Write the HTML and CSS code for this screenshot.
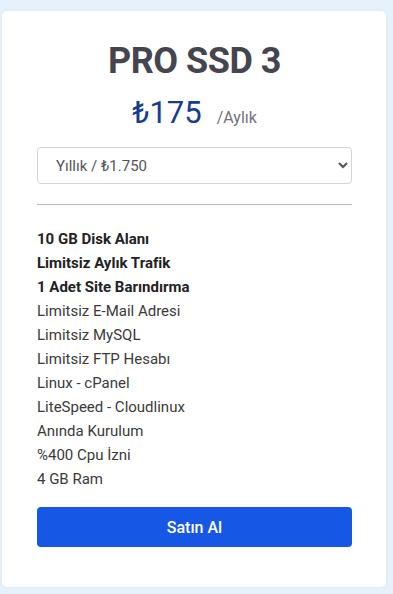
FILE: index.html
```html
<!DOCTYPE html>
<html lang="tr">
<head>
<meta charset="UTF-8" />
<meta name="viewport" content="width=device-width, initial-scale=1" />
<title>PRO SSD 3</title>
<link rel="stylesheet" href="styles.css">
</head>
<body>

<div class="plan">
  <h2 class="plan-title">PRO SSD 3</h2>

  <div class="plan-price">
    <span class="amount">₺175</span>
    <span class="period">/Aylık</span>
  </div>

  <select class="plan-cycle">
    <option>Yıllık / ₺1.750</option>
    <option>Aylık / ₺175</option>
  </select>

  <hr class="plan-sep" />

  <ul class="plan-features">
    <li class="strong">10 GB Disk Alanı</li>
    <li class="strong">Limitsiz Aylık Trafik</li>
    <li class="strong">1 Adet Site Barındırma</li>
    <li>Limitsiz E-Mail Adresi</li>
    <li>Limitsiz MySQL</li>
    <li>Limitsiz FTP Hesabı</li>
    <li>Linux - cPanel</li>
    <li>LiteSpeed - Cloudlinux</li>
    <li>Anında Kurulum</li>
    <li>%400 Cpu İzni</li>
    <li>4 GB Ram</li>
  </ul>

  <button class="plan-buy">Satın Al</button>
</div>

</body>
</html>
```

FILE: styles.css
```css
body {
  margin: 0;
  padding: 11px 7px 8px 2px;
  background: #e6f2fb;
  font-family: Roboto, "Noto Sans", sans-serif;
  color: #333;
}
.plan {
  background: #fff;
  border-radius: 5px;
  padding: 28px 34px 40px 35px;
  box-shadow: 0 0 4px rgba(0, 0, 0, 0.04);
}
.plan-title {
  margin: 0;
  text-align: center;
  font-size: 36px;
  font-weight: 700;
  color: #45454f;
  line-height: 44px;
  letter-spacing: -0.5px;
}
.plan-price {
  text-align: center;
  margin-top: 10px;
  line-height: 40px;
}
.plan-price .amount {
  font-size: 31px;
  color: #173c94;
}
.plan-price .period {
  font-size: 16px;
  color: #72737a;
  margin-left: 11px;
}
.plan-cycle {
  display: block;
  width: 100%;
  height: 37px;
  margin-top: 9px;
  padding: 0 10px 0 14px;
  font-family: inherit;
  font-size: 15px;
  color: #555;
  background: #fff;
  border: 1px solid #d2d4da;
  border-radius: 4px;
}
.plan-sep {
  margin: 20px 0 0;
  border: none;
  border-top: 1px solid #b9b9bf;
}
.plan-features {
  list-style: none;
  margin: 22px 0 0;
  padding: 0;
  font-size: 15px;
  line-height: 24px;
  color: #3a3a3a;
}
.plan-features .strong {
  font-weight: 700;
  color: #222;
}
.plan-buy {
  display: block;
  width: 100%;
  height: 40px;
  margin-top: 16px;
  border: none;
  border-radius: 4px;
  background: #1657e5;
  color: #fff;
  font-family: inherit;
  font-size: 16px;
  font-weight: 500;
  cursor: pointer;
}
```
